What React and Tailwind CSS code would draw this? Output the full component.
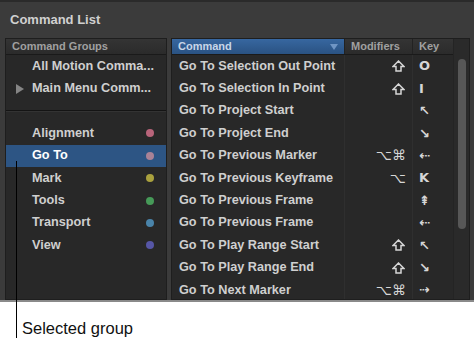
import React from 'react';

const GROUPS = [
  { name: 'Alignment', dot: 'bg-[#b8647a]' },
  { name: 'Go To', dot: 'bg-[#a98296]', selected: true },
  { name: 'Mark', dot: 'bg-[#a9a13e]' },
  { name: 'Tools', dot: 'bg-[#469a58]' },
  { name: 'Transport', dot: 'bg-[#4a84aa]' },
  { name: 'View', dot: 'bg-[#5656a6]' },
];

const COMMANDS = [
  { name: 'Go To Selection Out Point', mod: 'shift', key: 'O' },
  { name: 'Go To Selection In Point', mod: 'shift', key: 'I' },
  { name: 'Go To Project Start', mod: '', key: '↖' },
  { name: 'Go To Project End', mod: '', key: '↘' },
  { name: 'Go To Previous Marker', mod: '⌥⌘', key: '⇠' },
  { name: 'Go To Previous Keyframe', mod: '⌥', key: 'K' },
  { name: 'Go To Previous Frame', mod: '', key: '⇞' },
  { name: 'Go To Previous Frame', mod: '', key: '⇠' },
  { name: 'Go To Play Range Start', mod: 'shift', key: '↖' },
  { name: 'Go To Play Range End', mod: 'shift', key: '↘' },
  { name: 'Go To Next Marker', mod: '⌥⌘', key: '⇢' },
];

const font = { fontFamily: '"Liberation Sans", Arial, sans-serif' };
const glyphFont = { fontFamily: '"DejaVu Sans", sans-serif' };

function ShiftIcon() {
  return (
    <svg width="13" height="12" viewBox="0 0 13 12" className="mr-[1px]">
      <path d="M6.5 1 L12 6.5 H9 V11 H4 V6.5 H1 Z" fill="none" stroke="#d6d6d6" strokeWidth="1.5" strokeLinejoin="miter" />
    </svg>
  );
}

export default function App() {
  return (
    <div className="relative w-[474px] h-[346px] bg-white overflow-hidden" style={font}>
      {/* Panel */}
      <div className="h-[302px] bg-[#3b3b3b] border-t-[2px] border-[#2a2a2a] border-b-[2px] border-b-[#8a8a8a] flex flex-col">
        <div className="h-[36px] flex items-center pl-[10px] pb-[1px] text-[13px] font-bold text-[#d0d0d0]">Command List</div>

        <div className="flex gap-[4px] pl-[5px] pr-[4px] h-[262px]">
          {/* Command Groups */}
          <div className="w-[162px] h-full bg-[#282828] border border-[#1e1e1e] overflow-hidden">
            <div className="h-[16px] flex items-center pl-[6px] text-[11px] font-bold text-[#a0a0a0] bg-gradient-to-b from-[#343434] to-[#2b2b2b] border-b border-[#1a1a1a]">
              Command Groups
            </div>
            <div className="h-[22.4px] flex items-center pl-[26px] text-[12.7px] font-bold text-[#cfcfcf]">All Motion Comma...</div>
            <div className="h-[22.4px] flex items-center text-[12.7px] font-bold text-[#cfcfcf]">
              <span className="w-[26px] flex justify-center pl-[1px]">
                <svg width="8" height="10" viewBox="0 0 8 10"><path d="M0 0 L8 5 L0 10 Z" fill="#858585" /></svg>
              </span>
              Main Menu Comm...
            </div>
            <div className="h-[22.4px] flex items-center">
              <div className="w-full h-[2px] border-t border-[#141414] border-b border-b-[#333333]" />
            </div>
            {GROUPS.map((g) => (
              <div
                key={g.name}
                className={`h-[22.4px] flex items-center pl-[26px] pr-[12px] text-[12.7px] font-bold ${
                  g.selected ? 'bg-[#2d5584] text-white' : 'text-[#cfcfcf]'
                }`}
              >
                <span className="flex-1">{g.name}</span>
                <span className={`w-[8px] h-[8px] rounded-full ${g.dot}`} />
              </div>
            ))}
          </div>

          {/* Commands table */}
          <div className="flex-1 h-full bg-[#282828] border border-[#1e1e1e] overflow-hidden flex">
            <div className="flex-1 flex flex-col">
              <div className="h-[16px] flex border-b border-[#1a1a1a] text-[11px] font-bold">
                <div className="w-[172px] flex items-center justify-between pl-[6px] pr-[6px] text-[#c8d6e8] bg-gradient-to-b from-[#3767a0] to-[#2a5282]">
                  <span>Command</span>
                  <svg width="8" height="6" viewBox="0 0 8 6"><path d="M0 0 L8 0 L4 6 Z" fill="#6f95c4" /></svg>
                </div>
                <div className="w-[68px] flex items-center pl-[6px] text-[#a0a0a0] bg-gradient-to-b from-[#343434] to-[#2b2b2b] border-l border-[#222]">Modifiers</div>
                <div className="flex-1 flex items-center pl-[6px] text-[#a0a0a0] bg-gradient-to-b from-[#343434] to-[#2b2b2b] border-l border-[#222]">Key</div>
              </div>
              <div className="flex-1 flex">
                <div className="w-[172px] flex flex-col">
                  {COMMANDS.map((c, i) => (
                    <div key={i} className="h-[22.4px] shrink-0 flex items-center pl-[7px] text-[12.7px] font-bold text-[#cfcfcf] whitespace-nowrap">
                      {c.name}
                    </div>
                  ))}
                </div>
                <div className="w-[68px] flex flex-col border-l border-[#2f2f2f]">
                  {COMMANDS.map((c, i) => (
                    <div key={i} className="h-[22.4px] shrink-0 flex items-center justify-end pr-[6px] text-[14px] text-[#d6d6d6]" style={glyphFont}>
                      {c.mod === 'shift' ? <ShiftIcon /> : c.mod}
                    </div>
                  ))}
                </div>
                <div className="flex-1 flex flex-col border-l border-[#2f2f2f]">
                  {COMMANDS.map((c, i) => (
                    <div key={i} className="h-[22.4px] shrink-0 flex items-center pl-[6px] text-[13px] font-bold text-[#d6d6d6]" style={glyphFont}>
                      {c.key}
                    </div>
                  ))}
                </div>
              </div>
            </div>
            {/* Scrollbar */}
            <div className="w-[16px] h-full bg-[#2a2a2a] border-l border-[#242424] flex justify-center pt-[20px]">
              <div className="w-[8px] h-[170px] rounded-full bg-[#575757]" />
            </div>
          </div>
        </div>
      </div>

      {/* Callout */}
      <div className="absolute left-[16px] top-[161px] w-[1px] h-[177px] bg-black" />
      <div className="absolute left-[22px] top-[316px] text-[16.5px] text-[#111]">Selected group</div>
    </div>
  );
}
